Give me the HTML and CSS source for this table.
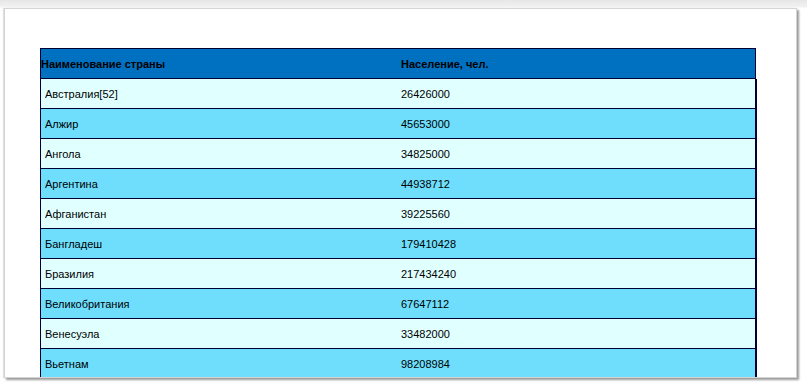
FILE: index.html
```html
<!DOCTYPE html>
<html lang="ru">
<head>
<meta charset="utf-8">
<link rel="stylesheet" href="styles.css">
</head>
<body>
<div class="frame">
  <div class="sheet">
    <div class="table">
      <div class="head">
        <div class="c1">Наименование страны</div>
        <div class="c2">Население, чел.</div>
      </div>
      <div class="row light"><div class="c1">Австралия[52]</div><div class="c2">26426000</div></div>
      <div class="row dark"><div class="c1">Алжир</div><div class="c2">45653000</div></div>
      <div class="row light"><div class="c1">Ангола</div><div class="c2">34825000</div></div>
      <div class="row dark"><div class="c1">Аргентина</div><div class="c2">44938712</div></div>
      <div class="row light"><div class="c1">Афганистан</div><div class="c2">39225560</div></div>
      <div class="row dark"><div class="c1">Бангладеш</div><div class="c2">179410428</div></div>
      <div class="row light"><div class="c1">Бразилия</div><div class="c2">217434240</div></div>
      <div class="row dark"><div class="c1">Великобритания</div><div class="c2">67647112</div></div>
      <div class="row light"><div class="c1">Венесуэла</div><div class="c2">33482000</div></div>
      <div class="row dark"><div class="c1">Вьетнам</div><div class="c2">98208984</div></div>
    </div>
  </div>
</div>
</body>
</html>
```
FILE: styles.css
```css
html, body {
  margin: 0;
  padding: 0;
  background: #ffffff;
  font-family: "Liberation Sans", Arial, sans-serif;
  font-size: 11px;
  color: #000;
}
body {
  width: 807px;
  height: 387px;
  overflow: hidden;
  background: linear-gradient(to bottom, #e6e6e6 0px, #f2f2f2 7px, #ffffff 8px);
}
.frame {
  padding: 8px 0 0 4px;
}
.sheet {
  box-sizing: border-box;
  width: 793px;
  height: 370px;
  background: #fff;
  border: 1px solid #d4d4d4;
  box-shadow: 2px 2px 2px #9a9a9a, -1px 0 1px #e0e0e0;
  overflow: hidden;
  padding: 39px 0 0 35px;
}
.table {
  width: 716px;
  border-left: 1px solid #000033;
}
.head {
  display: grid;
  grid-template-columns: 356px 1fr;
  align-items: center;
  height: 29px;
  margin-right: 1px;
  border-top: 1px solid #000033;
  border-right: 1px solid #000033;
  border-bottom: 1px solid #000033;
  background: #0070c0;
  font-weight: bold;
}
.head .c1 { padding-left: 0; }
.head .c2 { padding-left: 4px; }
.row {
  display: grid;
  grid-template-columns: 356px 1fr;
  align-items: center;
  height: 29px;
  border-bottom: 1px solid #000033;
  border-right: 2px solid #000033;
}
.row .c1 { padding-left: 4px; }
.row .c2 { padding-left: 4px; }
.light { background: #e0ffff; }
.dark { background: #6fdefd; }
```
